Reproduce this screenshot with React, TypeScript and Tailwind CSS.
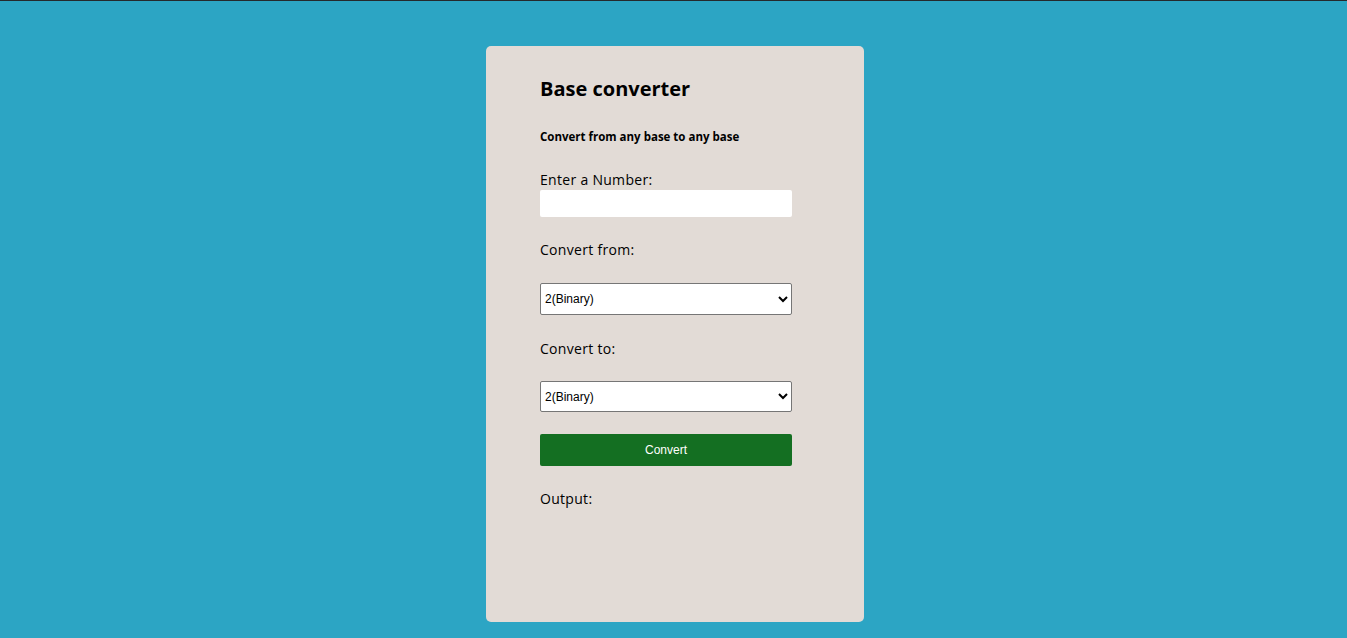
import { useState } from "react";

const bases = [
  { value: "2", label: "2(Binary)" },
  { value: "8", label: "8(Octal)" },
  { value: "10", label: "10(Decimal)" },
  { value: "16", label: "16(Hexadecimal)" },
];

export default function App() {
  const [num, setNum] = useState("");
  const [from, setFrom] = useState("2");
  const [to, setTo] = useState("2");
  const [output, setOutput] = useState("");

  const convert = () => {
    const n = parseInt(num, Number(from));
    setOutput(isNaN(n) ? "" : n.toString(Number(to)).toUpperCase());
  };

  return (
    <div className="min-h-[638px] bg-[#2ca5c4] border-t border-[#25292d] font-['Open_Sans',sans-serif]">
      <div className="flex justify-center pl-[3px] pt-[45px]">
        <div className="w-[378px] h-[576px] rounded-[5px] bg-[#e2dbd6] px-[54px] pt-[28px]">
          <h1 className="text-[20px] font-bold leading-[30px] text-black">Base converter</h1>
          <p className="mt-[24px] text-[11.5px] font-bold leading-[18px] text-black">
            Convert from any base to any base
          </p>
          <label className="block mt-[24px] text-[14px] leading-[20px] tracking-[0.3px] text-black">
            Enter a Number:
          </label>
          <input
            value={num}
            onChange={(e) => setNum(e.target.value)}
            className="mt-0 block w-[252px] h-[27px] bg-white rounded-[2px] px-2 text-[13px] outline-none"
          />
          <label className="block mt-[23px] text-[14px] leading-[20px] tracking-[0.3px] text-black">
            Convert from:
          </label>
          <select
            value={from}
            onChange={(e) => setFrom(e.target.value)}
            className="mt-[23px] block w-[252px] h-[32px] bg-white border border-[#767676] rounded-[2px] pl-0 text-[12px] font-['Liberation_Sans',sans-serif] text-black"
          >
            {bases.map((b) => (
              <option key={b.value} value={b.value}>
                {b.label}
              </option>
            ))}
          </select>
          <label className="block mt-[24px] text-[14px] leading-[20px] tracking-[0.3px] text-black">
            Convert to:
          </label>
          <select
            value={to}
            onChange={(e) => setTo(e.target.value)}
            className="mt-[22px] block w-[252px] h-[31px] bg-white border border-[#767676] rounded-[2px] pl-0 text-[12px] font-['Liberation_Sans',sans-serif] text-black"
          >
            {bases.map((b) => (
              <option key={b.value} value={b.value}>
                {b.label}
              </option>
            ))}
          </select>
          <button
            onClick={convert}
            className="mt-[22px] block w-[252px] h-[32px] bg-[#146f22] rounded-[2px] text-white text-[12px] font-['Liberation_Sans',sans-serif]"
          >
            Convert
          </button>
          <div className="mt-[23px] text-[14px] leading-[20px] tracking-[0.3px] text-black">
            Output: {output}
          </div>
        </div>
      </div>
    </div>
  );
}
